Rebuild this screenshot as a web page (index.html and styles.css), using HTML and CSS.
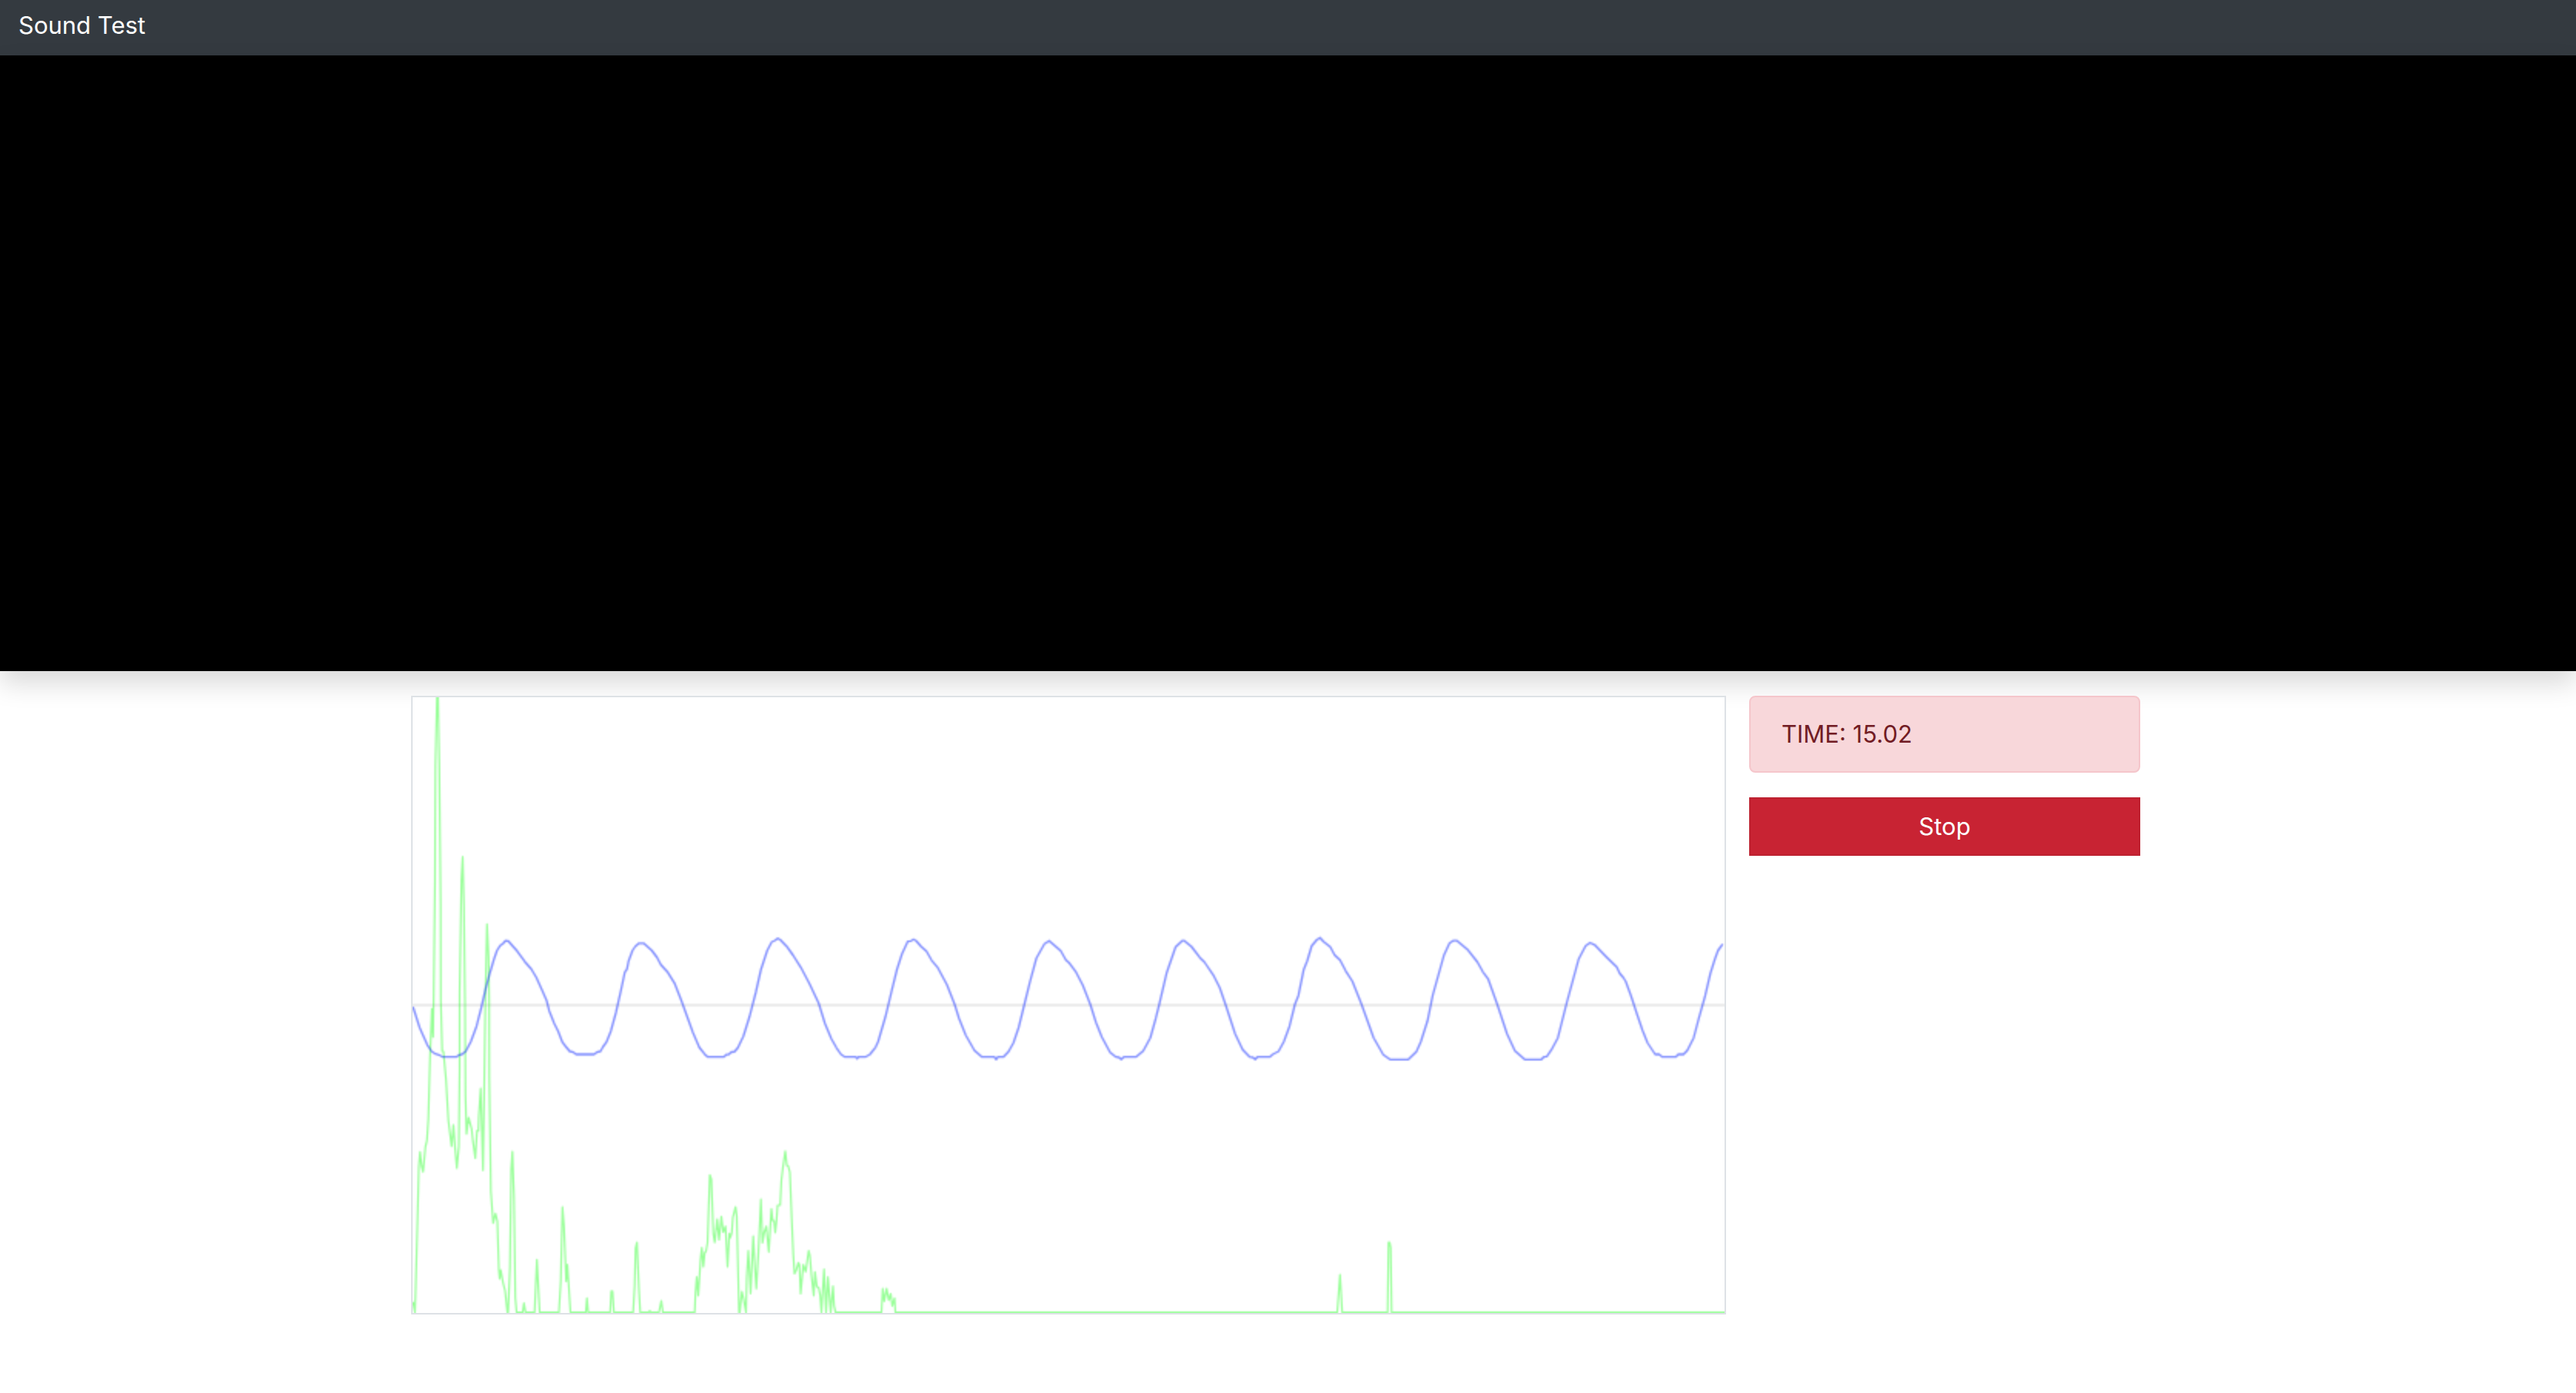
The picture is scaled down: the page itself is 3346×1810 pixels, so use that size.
FILE: index.html
```html
<!DOCTYPE html>
<html lang="en">
<head>
<meta charset="utf-8">
<meta name="viewport" content="width=device-width, initial-scale=1">
<title>Sound Test</title>
<link rel="stylesheet" href="styles.css">
</head>
<body>
<header class="navbar"><a class="navbar-brand" href="#">Sound Test</a></header>
<section class="stage" aria-label="Stage"></section>
<main class="content">
  <div class="layout">
    <canvas class="scope" id="scope" width="852" height="400" role="img" aria-label="Waveform and frequency spectrum"></canvas>
    <aside class="controls">
      <div class="alert" role="status">TIME: 15.02</div>
      <button class="btn-stop" type="button">Stop</button>
    </aside>
  </div>
</main>
<script src="scope.js"></script>
</body>
</html>
```
FILE: styles.css
```css
* {
  box-sizing: border-box;
}

body {
  margin: 0;
  background: #fff;
  color: #212529;
  font-family: Inter, "Liberation Sans", sans-serif;
  font-size: 31px;
  line-height: 48px;
}

.navbar {
  display: flex;
  align-items: center;
  height: 72px;
  padding: 0 24px 6px;
  background: #343a40;
}

.navbar-brand {
  color: #fff;
  text-decoration: none;
}

.stage {
  height: 800px;
  background: #000;
  box-shadow: 0 16px 32px rgba(0, 0, 0, 0.15);
}

.content {
  padding: 32px 32px 32px 0;
}

.layout {
  display: grid;
  grid-template-columns: minmax(0, 1fr) 508px;
  align-items: start;
  gap: 30px;
  max-width: 2246px;
  margin: 0 auto;
}

.scope {
  display: block;
  width: 100%;
  height: auto;
  border: 2px solid #dee2e6;
  background: #fff;
}

.controls {
  display: flex;
  flex-direction: column;
  gap: 32px;
}

.alert {
  padding: 24px 40px;
  border: 2px solid #f5c6cb;
  border-radius: 8px;
  background: #f8d7da;
  color: #721c24;
}

.btn-stop {
  width: 100%;
  padding: 12px 24px;
  border: 2px solid #bd2130;
  border-radius: 0;
  background: #c82333;
  color: #fff;
  font: inherit;
  cursor: pointer;
}
```
FILE: scope.js
```js
// Each trace is a flat list of x, y pairs on the 852 x 400 canvas.
const spectrum = [
  0.3,392.8, 1.5,400, 2,383.7, 3.3,333.7, 4,305.3, 4.8,295.3, 5.8,304.5, 6.8,308.3, 8.3,292, 9.3,287.8,
  10.2,273.7, 11.3,233.7, 12.5,202.3, 13.3,220.7, 13.7,192, 14.5,118.7, 14.8,43.7, 15.8,0, 16.5,0,
  17.3,43.7, 18.2,135, 18.3,197, 19.2,230, 20,230, 21.7,248.7, 23.2,275, 24.2,282.8, 25.3,291.7,
  26.5,277.8, 27.5,292, 28.7,306, 30,292, 30.5,242, 30.5,192, 31.7,118.7, 32.5,103.7, 33.3,135.3,
  34,197, 34.3,258.7, 35,283.7, 36.3,273, 38.3,280.3, 39.2,288.7, 40.7,299.5, 41.8,281.7, 42.7,281.7,
  43,272, 44.2,254, 45.7,307.3, 46.5,253.7, 47.3,192, 48.3,147.3, 49.3,168.7, 49.7,197, 49.8,247,
  50.8,321, 52.3,341.7, 53.8,335.3, 55,340.3, 56,372, 56.5,377.8, 57.2,372, 58.7,380.3, 60,385.3,
  61.5,400, 62,400, 63.2,370.3, 64,307, 64.8,295, 65.8,324.5, 66.7,390.3, 67.5,400, 71.5,400,
  72.3,393.7, 73.3,400, 79.2,400, 80.7,365.3, 82.5,400, 95,400, 96.2,379.5, 97.3,331.2, 98.3,343.7,
  99.7,379.5, 100.5,368.7, 102.5,400, 112.5,400, 113.2,390.3, 114,400, 128.3,400, 129,385.8,
  129.8,385.8, 130.7,400, 143.2,400, 144.2,382, 144.8,357.8, 145.7,354.2, 147,385.3, 147.8,400,
  153.3,400, 154,398.7, 154.7,400, 160,400, 161.5,392, 162.5,400, 183.2,400, 183.7,387, 184.5,376.5,
  185.5,388.7, 187,365.3, 187.8,357.5, 188.8,370, 189.7,360.8, 190.5,360, 191.5,354.5, 193,310.3,
  194,313.3, 195.3,348.7, 196.2,354.2, 197.8,339, 199,352.5, 200.5,337.3, 201.7,347.5, 203.2,343.7,
  204.5,370, 205.7,348.3, 206.3,351.2, 207.3,347.8, 208,337.8, 209.7,331.2, 210.5,337, 211.3,370.3,
  212,400, 212.5,400, 213.8,386.2, 215,391.2, 216.5,400, 217,377, 218,359.5, 219.5,387.3, 221.2,350,
  222.2,368.7, 223.2,384.2, 224.5,362, 226.2,326.2, 227.2,354.5, 228.3,347.8, 229.7,343.7,
  231.3,360.3, 233,332.3, 233.8,340, 234.7,340, 235.5,347.8, 236.3,340.3, 237,330, 238.7,330,
  239.5,313.7, 240.5,305.3, 242,294.8, 243,304, 244,304.8, 245,308.7, 246.2,338.7, 247.2,362,
  248,374.5, 249.3,371.7, 250.5,367.3, 251.2,368.7, 252,387.5, 253.7,368.7, 255.3,373.2, 257.2,359.5,
  258,362.8, 259,375.3, 260.5,388.7, 261.3,373.3, 262.5,382.8, 263.7,383.7, 264.7,388.7, 265.5,400,
  267.2,371.7, 268.5,400, 269.7,376.7, 271.5,400, 273,382.5, 273.7,395.3, 274.7,400, 304.5,400,
  305.3,384.2, 306.3,392.3, 307.8,384.2, 309.2,391.7, 310.5,387.5, 311.5,395.3, 313,390.3, 313.5,400,
  600.5,400, 602.3,375, 603.7,400, 633.2,400, 633.8,354, 634.5,354, 635.2,357.5, 635.8,400, 852,400
];

const waveform = [
  0.3,201.2, 4.5,214.5, 6.7,219.5, 9.5,225.8, 12.3,230, 14.8,231.7, 17,232.3, 19.5,233.7, 28.3,233.7,
  30.3,232.3, 32,232, 34.5,230, 37.8,223.7, 41.5,213.7, 44.5,202, 47.5,189, 50.3,178.7, 52.8,170.3,
  54.8,164.5, 57,161.2, 58.7,160, 60.3,158.2, 62,158.3, 65.3,162, 67.8,164.8, 72.8,171.7, 77,176.5,
  80.3,182, 83.7,189.5, 87,197, 88.7,203.7, 92,212, 94.5,217, 97.3,224.2, 99.5,227, 102,230,
  104.5,230.7, 106.2,232, 117.8,232, 119.5,230.7, 122,230, 123.7,227, 125.8,224.2, 128.7,217,
  132,205, 135.3,190.3, 137.8,178.7, 139.2,176.7, 140.3,171.2, 142.8,164.5, 144.5,162, 147,159.8,
  150,159.8, 155.3,164.5, 158.7,169, 161.2,173.7, 165.3,178.2, 170.3,186.2, 174.5,197, 182,217.8,
  186.2,227.5, 189.5,231.7, 191.7,233.7, 202,233.7, 203.7,232.2, 205.3,232, 207,230.5, 209,230.3,
  211.2,227.8, 214.8,220.3, 218.7,207.8, 222.8,192, 226.2,177, 230.3,164.5, 233.2,159, 235.3,158,
  237,156.7, 238.7,157.5, 242.8,161.7, 247,167.5, 252,175.3, 257.8,186.2, 263.7,198.7, 267.8,212,
  272,222, 275.3,227.8, 278.2,232, 280.8,233.7, 287.8,233.7, 288.7,234.8, 289.5,233.7, 294,233.7,
  297,232, 300.7,227.3, 302.3,223.7, 307,207.8, 311.2,190.3, 314.5,177, 317.8,166.7, 321.5,158.7,
  323.7,158.3, 325.3,157.3, 327,158.3, 330.3,162, 333.7,165, 337,170.8, 340.8,175.3, 347,186.7,
  352,199.5, 354.9,208.7, 359.2,219.5, 364.9,229.5, 369.8,233.7, 377.8,233.7, 379,235.3, 380.1,233.7,
  383.6,233.7, 387,230.3, 390.2,224.5, 393.6,214.5, 397.3,199.5, 400.8,185.3, 405.1,169.5,
  410.3,160.3, 413.4,158.2, 420.9,164.8, 424.3,170.8, 426.6,172.8, 430.9,178.7, 435.2,187,
  440.1,199.5, 443.8,211.2, 447.6,220.7, 453,230.8, 456.8,233.7, 458.8,234, 460.2,235.3, 461.9,233.7,
  469.7,233.7, 474.5,229.8, 479.1,221.2, 482.6,208.7, 484.9,199.5, 489.8,178.7, 495.5,162.3,
  499.8,158.2, 501.2,158.2, 505.8,162, 511.3,169.2, 514.2,172, 519.9,180.3, 524.2,188.7, 527.9,199.5,
  534.2,218.7, 539.1,229, 543.7,233.7, 545.7,234, 547.2,235.3, 548.6,233.7, 556.6,233.7, 558.6,232,
  562.4,230, 565.8,223.7, 569.5,213.7, 573,199.5, 575.3,193.7, 578.7,177, 581,171.2, 583.9,161.5,
  587.3,157.5, 589.3,156.2, 591.6,158.7, 596,162.3, 598.8,167.5, 602.3,170.8, 606,177.8, 610.3,184.5,
  616,198.7, 624.1,221.2, 630.4,232.3, 634.7,235.3, 646.7,235.3, 651.9,230.3, 654.8,223.7,
  659.1,210.3, 662.5,193.7, 669.7,167.8, 673.4,159.8, 675.7,158.2, 678.3,158.2, 684.9,163.7,
  691.5,172, 695,178.3, 698.4,182.8, 704.4,199.5, 710.8,218.7, 715.9,229.8, 722.2,235.3, 733.1,235.3,
  734.6,233.7, 736.6,233.3, 739.5,229.2, 743.8,221.2, 749.5,198.7, 757.2,170.3, 761.8,161.5,
  764.7,159.5, 767.6,160.8, 775.3,168.7, 782,175.3, 784,179.5, 786.2,182, 787.8,184.5, 791.2,193.7,
  795.3,206.2, 798.7,216.2, 802,224.5, 805.3,229.5, 807,232, 809.5,232, 811.7,233.7, 820.3,233.7,
  822,232, 825.3,232, 827.8,229.5, 832,221.2, 835.3,208.7, 839.5,193.7, 842.8,179.5, 845.7,170.3,
  847.8,164.5, 850.8,160.3
];

const canvas = document.getElementById("scope");
const ctx = canvas.getContext("2d");

function trace(points, color, width) {
  ctx.strokeStyle = color;
  ctx.lineWidth = width;
  ctx.lineJoin = "round";
  ctx.beginPath();
  for (let i = 0; i < points.length; i += 2) {
    // Keep silent bins just inside the bottom edge so their line stays visible
    ctx.lineTo(points[i], Math.min(points[i + 1], canvas.height - 0.5));
  }
  ctx.stroke();
}

// Zero line
trace([0, 200, canvas.width, 200], "rgba(0, 0, 0, 0.15)", 1);
trace(spectrum, "rgba(0, 255, 0, 0.4)", 1.2);
trace(waveform, "rgba(0, 30, 255, 0.5)", 1.3);
```
